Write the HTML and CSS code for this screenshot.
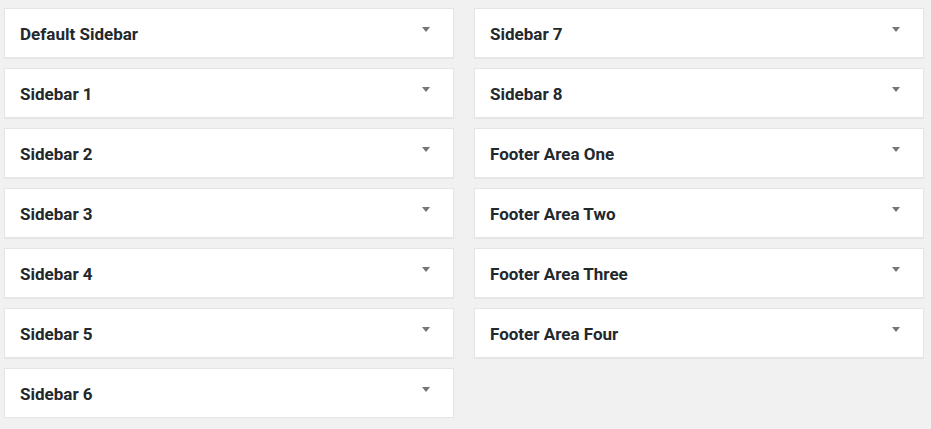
FILE: index.html
```html
<!DOCTYPE html>
<html>
<head>
<meta charset="utf-8">
<link rel="stylesheet" href="styles.css">
</head>
<body>
<div class="sidebars">
  <div class="column">
    <div class="sidebar"><h2 class="sidebar-name">Default Sidebar</h2><span class="toggle"></span></div>
    <div class="sidebar"><h2 class="sidebar-name">Sidebar 1</h2><span class="toggle"></span></div>
    <div class="sidebar"><h2 class="sidebar-name">Sidebar 2</h2><span class="toggle"></span></div>
    <div class="sidebar"><h2 class="sidebar-name">Sidebar 3</h2><span class="toggle"></span></div>
    <div class="sidebar"><h2 class="sidebar-name">Sidebar 4</h2><span class="toggle"></span></div>
    <div class="sidebar"><h2 class="sidebar-name">Sidebar 5</h2><span class="toggle"></span></div>
    <div class="sidebar"><h2 class="sidebar-name">Sidebar 6</h2><span class="toggle"></span></div>
  </div>
  <div class="column">
    <div class="sidebar"><h2 class="sidebar-name">Sidebar 7</h2><span class="toggle"></span></div>
    <div class="sidebar"><h2 class="sidebar-name">Sidebar 8</h2><span class="toggle"></span></div>
    <div class="sidebar"><h2 class="sidebar-name">Footer Area One</h2><span class="toggle"></span></div>
    <div class="sidebar"><h2 class="sidebar-name">Footer Area Two</h2><span class="toggle"></span></div>
    <div class="sidebar"><h2 class="sidebar-name">Footer Area Three</h2><span class="toggle"></span></div>
    <div class="sidebar"><h2 class="sidebar-name">Footer Area Four</h2><span class="toggle"></span></div>
  </div>
</div>
</body>
</html>
```
FILE: styles.css
```css
html, body {
  margin: 0;
  padding: 0;
  background: #f1f1f1;
  font-family: Roboto, "Liberation Sans", sans-serif;
  color: #23282d;
}
.sidebars {
  display: grid;
  grid-template-columns: 450px 450px;
  column-gap: 20px;
  padding: 8px 0 0 4px;
  align-items: start;
}
.column {
  display: flex;
  flex-direction: column;
  gap: 10px;
}
.sidebar {
  box-sizing: border-box;
  height: 50px;
  background: #fff;
  border: 1px solid #e5e5e5;
  box-shadow: 0 1px 1px rgba(0,0,0,0.04);
  display: flex;
  align-items: center;
  justify-content: space-between;
  padding: 1px 23px 0 15px;
}
.sidebar-name {
  margin: 0;
  font-size: 17px;
  font-weight: 700;
  line-height: 20px;
}
.toggle {
  width: 0;
  height: 0;
  border-left: 4px solid transparent;
  border-right: 4px solid transparent;
  border-top: 5px solid #72777c;
  align-self: flex-start;
  margin-top: 17px;
}
```
